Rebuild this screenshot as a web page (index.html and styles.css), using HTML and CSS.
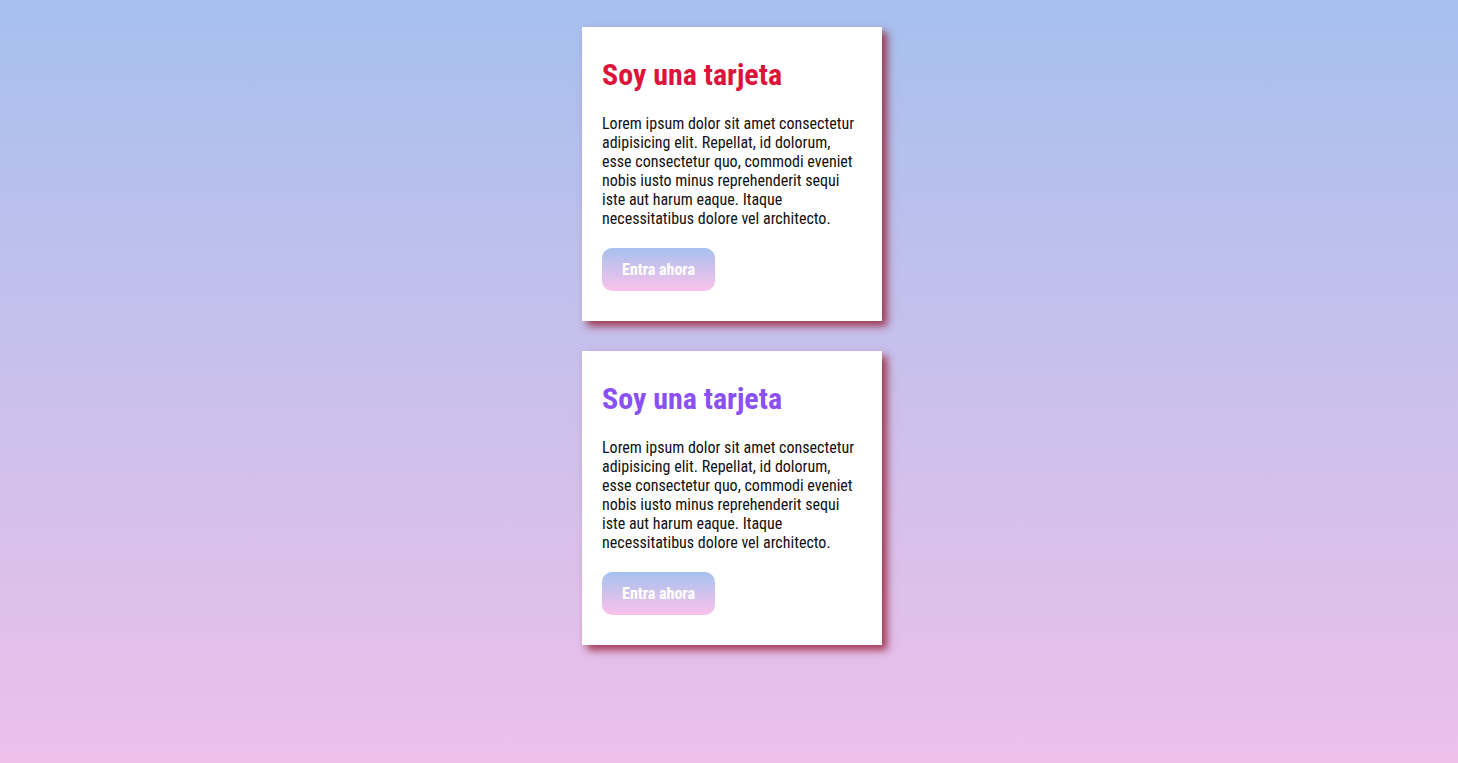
FILE: index.html
```html
<!DOCTYPE html>
<html lang="es">
<head>
<meta charset="utf-8">
<title>Tarjetas</title>
<link rel="stylesheet" href="styles.css">
</head>
<body>
<main class="cards">
  <article class="card">
    <h2 class="card-title red">Soy una tarjeta</h2>
    <p class="card-text">Lorem ipsum dolor sit amet consectetur adipisicing elit. Repellat, id dolorum, esse consectetur quo, commodi eveniet nobis iusto minus reprehenderit sequi iste aut harum eaque. Itaque necessitatibus dolore vel architecto.</p>
    <a class="card-btn" href="#">Entra ahora</a>
  </article>
  <article class="card">
    <h2 class="card-title purple">Soy una tarjeta</h2>
    <p class="card-text">Lorem ipsum dolor sit amet consectetur adipisicing elit. Repellat, id dolorum, esse consectetur quo, commodi eveniet nobis iusto minus reprehenderit sequi iste aut harum eaque. Itaque necessitatibus dolore vel architecto.</p>
    <a class="card-btn" href="#">Entra ahora</a>
  </article>
</main>
</body>
</html>
```

FILE: styles.css
```css
html, body {
  margin: 0;
  height: 100%;
}
body {
  background: linear-gradient(to bottom, #a6c0ee 0%, #edc0ea 100%);
  font-family: "Roboto Condensed", Roboto, "Liberation Sans", sans-serif;
  font-stretch: condensed;
}
.cards {
  display: flex;
  flex-direction: column;
  align-items: center;
  gap: 30px;
  padding: 27px 0 0 6px;
}
.card {
  width: 260px;
  padding: 20px 20px 30px;
  background: #fff;
  box-shadow: 5px 5px 8px rgba(150, 30, 50, 0.85);
}
.card-title {
  margin: 8px 0 19px;
  font-size: 30px;
  line-height: 40px;
  font-weight: 700;
}
.red { color: #dc143c; }
.purple { color: #8a4ff5; }
.card-text {
  margin: 0 0 20px;
  font-size: 16px;
  line-height: 19px;
  color: #111;
}
.card-btn {
  display: inline-block;
  width: 113px;
  height: 43px;
  line-height: 43px;
  text-align: center;
  border-radius: 10px;
  background: linear-gradient(to bottom, #a6c1ee, #fbc2eb);
  color: #fff;
  font-weight: 700;
  font-size: 16px;
  text-decoration: none;
}
```
